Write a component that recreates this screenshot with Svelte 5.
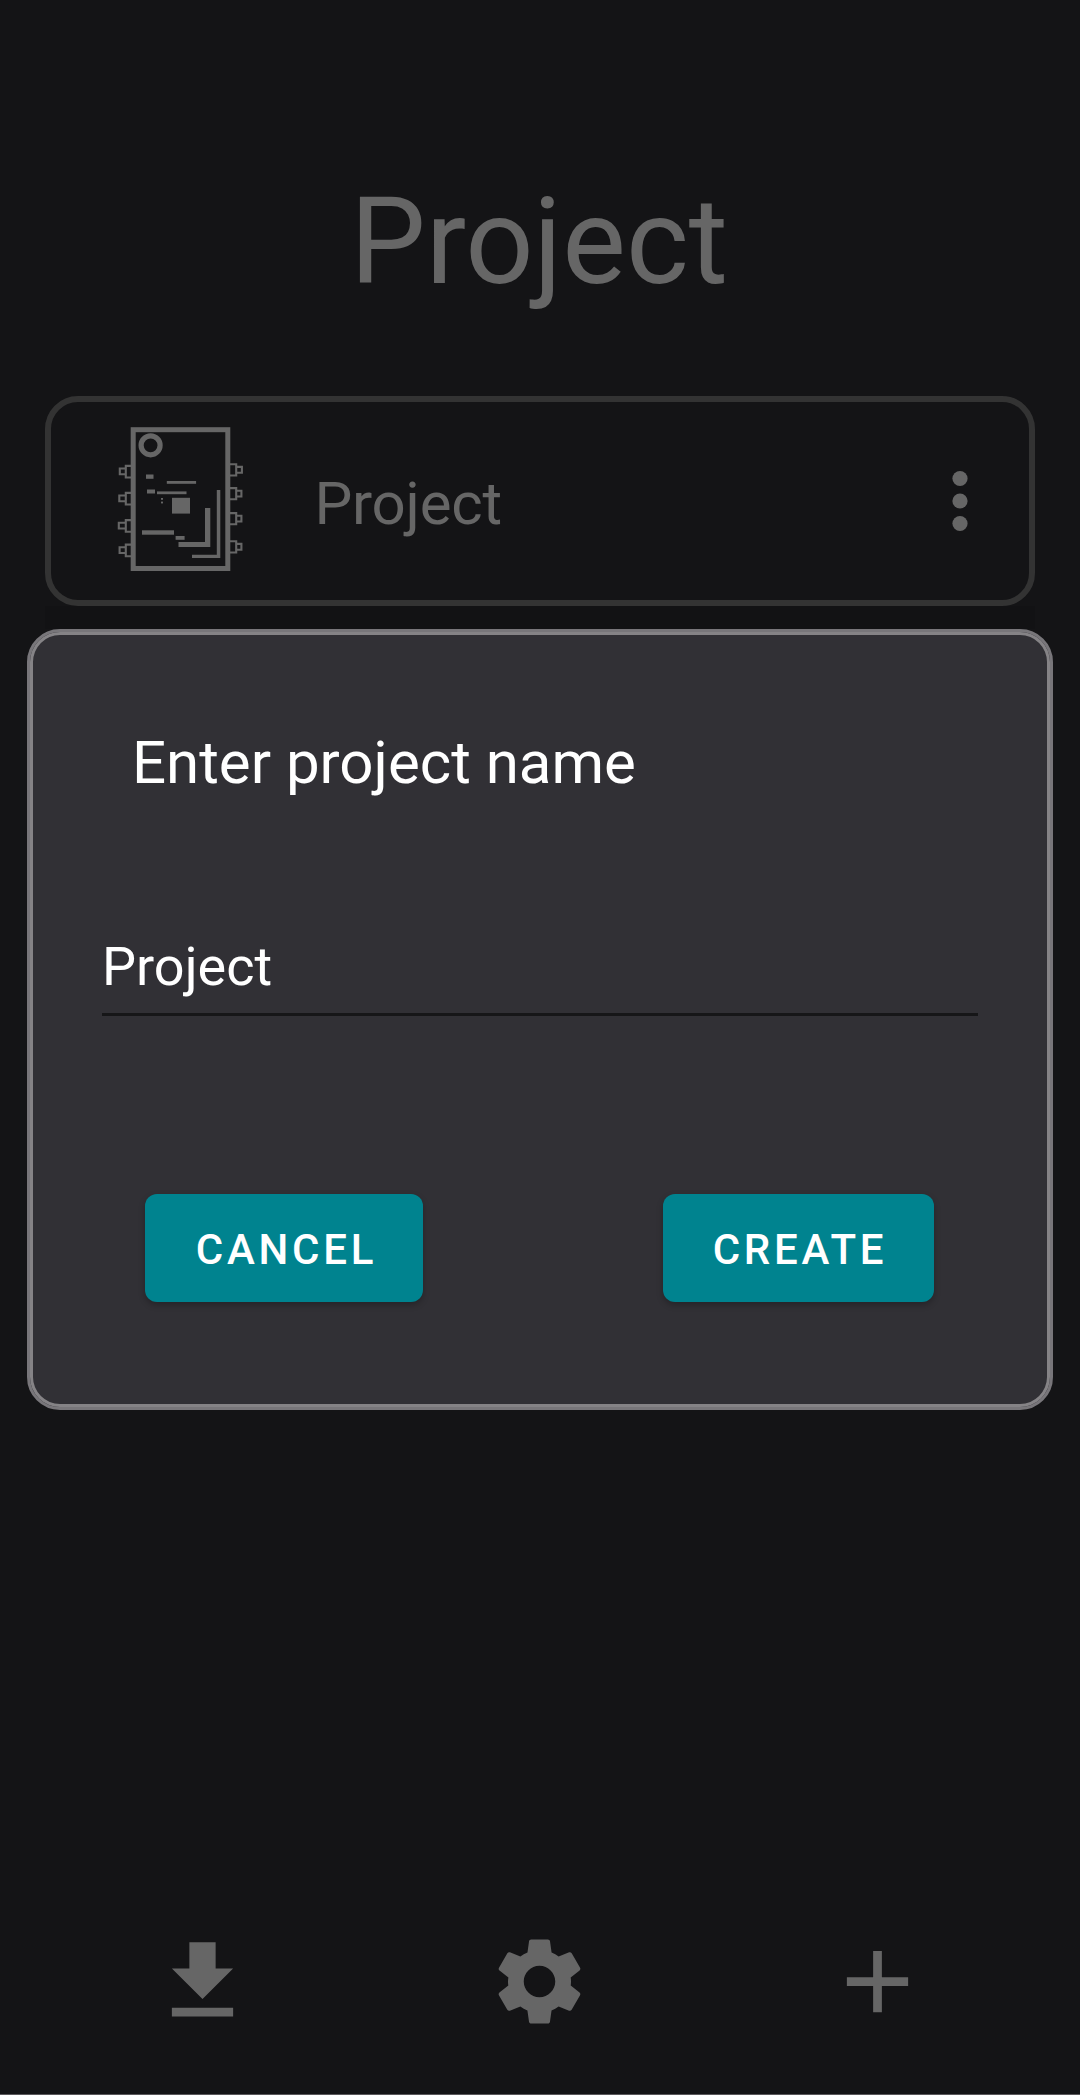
<script>
  let name = $state('Project');
  // Pin centres along each long edge of the chip drawing
  const leftPins = [[19, 61.3], [18.5, 88.3], [18, 115.5], [18.8, 140]];
  const rightPins = [[142.5, 59.7], [142, 83.5], [142, 108.5], [142, 136.7]];
</script>

<main class="screen">
  <h1>Project</h1>

  <section class="card">
    <svg class="chip" viewBox="0 0 160 180" fill="none" stroke="#666">
      <rect x="33.2" y="19.7" width="94.6" height="138.8" stroke-width="5" />
      <circle cx="50.6" cy="35.3" r="9.5" stroke-width="5.2" />
      <g stroke-width="2.1">
        {#each leftPins as [x, y]}
          <path d="M31 {y - 5.4}h-5.2v11.6h5.2M25.8 {y - 2.8}H{x + 0.8}v5.8h{25 - x}" />
        {/each}
        {#each rightPins as [x, y]}
          <path d="M130 {y - 5.4}h6.2v11.2h-6.2M136.2 {y - 2.8}H{x - 0.6}v5.8H136.2z" />
        {/each}
      </g>
      <g fill="#666" stroke="none">
        <rect x="46" y="64.5" width="7.5" height="4.3" />
        <rect x="66.8" y="71" width="29.3" height="2.8" />
        <rect x="47" y="79.5" width="8" height="4" />
        <rect x="57" y="81.4" width="29.5" height="2.8" />
        <rect x="61" y="88" width="2" height="1.8" />
        <rect x="61" y="91.6" width="2" height="1.8" />
        <rect x="72" y="87.8" width="18" height="15.8" />
        <rect x="42" y="120.3" width="32" height="4.4" />
        <rect x="75.6" y="126" width="9" height="3.8" />
        <path d="M105 98h5.3v39H78.5v-5H105z" />
        <path d="M116.8 80h3.5v68H92v-3.2h24.8z" />
      </g>
    </svg>
    <span class="label">Project</span>
    <svg class="more" viewBox="0 0 16 62" fill="#666">
      <circle cx="8" cy="8.5" r="7.6" />
      <circle cx="8" cy="31" r="7.6" />
      <circle cx="8" cy="53.5" r="7.6" />
    </svg>
  </section>

  <div class="strip"></div>

  <section class="dialog">
    <h2>Enter project name</h2>
    <input bind:value={name} aria-label="Project name" spellcheck="false" />
    <div class="actions">
      <button class="cancel">CANCEL</button>
      <button class="create">CREATE</button>
    </div>
  </section>

  <nav>
    <svg viewBox="0 0 24 24"><path d="M19 9h-4V3H9v6H5l7 7 7-7zM5 18v2h14v-2H5z" /></svg>
    <svg viewBox="0 0 24 24"><path d="M19.14 12.94c.04-.3.06-.61.06-.94 0-.32-.02-.64-.07-.94l2.03-1.58c.18-.14.23-.41.12-.61l-1.92-3.32c-.12-.22-.37-.29-.59-.22l-2.39.96c-.5-.38-1.03-.7-1.62-.94l-.36-2.54c-.04-.24-.24-.41-.48-.41h-3.84c-.24 0-.43.17-.47.41l-.36 2.54c-.59.24-1.13.57-1.62.94l-2.39-.96c-.22-.08-.47 0-.59.22L2.74 8.87c-.12.21-.08.47.12.61l2.03 1.58c-.05.3-.09.63-.09.94s.02.64.07.94l-2.03 1.58c-.18.14-.23.41-.12.61l1.92 3.32c.12.22.37.29.59.22l2.39-.96c.5.38 1.03.7 1.62.94l.36 2.54c.05.24.24.41.48.41h3.84c.24 0 .44-.17.47-.41l.36-2.54c.59-.24 1.13-.56 1.62-.94l2.39.96c.22.08.47 0 .59-.22l1.92-3.32c.12-.22.07-.47-.12-.61l-2.01-1.58zM12 15.6c-1.98 0-3.6-1.62-3.6-3.6s1.62-3.6 3.6-3.6 3.6 1.62 3.6 3.6-1.62 3.6-3.6 3.6z" /></svg>
    <svg viewBox="0 0 24 24"><path d="M19 13h-6v6h-2v-6H5v-2h6V5h2v6h6v2z" /></svg>
  </nav>
</main>

<style>
  :global(body) {
    margin: 0;
    background: #141416;
  }
  .screen {
    box-sizing: border-box;
    width: 1080px;
    height: 2095px;
    display: flex;
    flex-direction: column;
    overflow: hidden;
    background: #141416;
    border-bottom: 1px solid #5a585b;
    font-family: Roboto, sans-serif;
  }
  h1 {
    margin: 172px 2px 0 0;
    height: 224px;
    line-height: 141px;
    text-align: center;
    font-size: 120px;
    font-weight: 400;
    color: #666;
  }
  .card {
    box-sizing: border-box;
    flex: none;
    height: 210px;
    margin: 0 45px;
    padding: 0 61px 0 49px;
    display: flex;
    align-items: center;
    border: 6px solid #333;
    border-radius: 33px;
  }
  .chip {
    width: 160px;
    height: 180px;
    margin-top: -2px;
  }
  .label {
    flex: 1;
    margin: 5px 0 0 54.5px;
    font-size: 60px;
    line-height: 70px;
    letter-spacing: -0.25px;
    color: #666;
  }
  .more {
    width: 16px;
    height: 62px;
  }
  .strip {
    flex: none;
    height: 23px;
    margin: 0 45px;
    background: #121214;
  }
  .dialog {
    box-sizing: border-box;
    flex: none;
    height: 781px;
    margin: 0 27px;
    padding: 3px 72px;
    display: flex;
    flex-direction: column;
    border: 3px solid #78767a;
    border-radius: 33px;
    background: #313035;
    box-shadow: inset 0 0 0 3px #858386;
  }
  h2 {
    margin: 93px 0 0 30px;
    font-size: 60px;
    line-height: 70px;
    font-weight: 400;
    color: #fff;
  }
  input {
    box-sizing: border-box;
    height: 90px;
    margin: 128px 0 0;
    padding: 1px 0 8px;
    border: 0;
    border-bottom: 3px solid #161618;
    outline: 0;
    background: none;
    font: 400 54px/64px Roboto, sans-serif;
    color: #fff;
  }
  .actions {
    display: flex;
    justify-content: space-between;
    margin: 178px 44px 0 43px;
  }
  button {
    box-sizing: border-box;
    height: 108px;
    padding: 3px 0 0 3px;
    border: 0;
    border-radius: 12px;
    background: #00838f;
    box-shadow: 0 3px 6px rgb(0 0 0 / 25%);
    font: 500 42px/50px Roboto, sans-serif;
    letter-spacing: 3.75px;
    color: #fff;
  }
  .cancel {
    width: 278px;
    padding-left: 5px;
  }
  .create {
    width: 271px;
  }
  nav {
    display: flex;
    justify-content: space-between;
    margin: auto 150px 60px;
  }
  nav svg {
    width: 105px;
    height: 105px;
    fill: #666;
  }
  nav svg:nth-child(2) {
    margin-right: 1px;
  }
</style>
